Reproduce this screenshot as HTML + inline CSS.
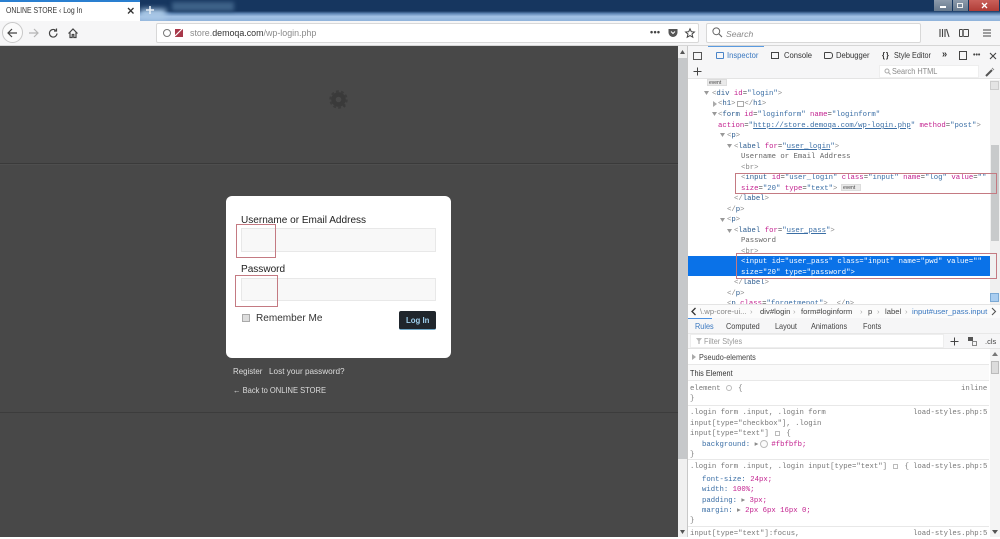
<!DOCTYPE html>
<html><head><meta charset="utf-8"><style>
html,body{margin:0;padding:0;width:1000px;height:537px;overflow:hidden;background:#fff;font-family:"Liberation Sans",sans-serif}
.a{position:absolute}
.t{position:absolute;white-space:pre;line-height:10px}
.m{font:7.3px/10px "Liberation Mono",monospace;color:#555;position:absolute;white-space:pre}
.s{font:7.3px/10px "Liberation Mono",monospace;color:#777;position:absolute;white-space:pre}
.m b,.s b{font-weight:normal}
.p{color:#c3228f}.v{color:#2c5c8f}.g{color:#8a8a8a}.n{color:#3a6ea5}
.tab{position:absolute;font-size:8.3px;line-height:10px;color:#333;white-space:pre;transform:scaleX(.92);transform-origin:0 0}
.rt{position:absolute;font-size:8.3px;line-height:10px;color:#444;white-space:pre;transform:scaleX(.88);transform-origin:0 0}
svg{position:absolute;overflow:visible}
.red{position:absolute;border:1px solid #c47a82;box-sizing:border-box;z-index:5}
</style></head><body>
<!-- title bar -->
<div class="a" style="left:0;top:0;width:1000px;height:21px;background:#16365f"></div>
<div class="a" style="left:140px;top:11px;width:860px;height:10px;background:linear-gradient(#16365f 0,#5f86b4 25%,#a4c3e6 55%,#8fb2da 100%)"></div>
<div class="a" style="left:140px;top:9px;width:26px;height:10px;background:#a9c8e6;filter:blur(3px)"></div>
<div class="a" style="left:172px;top:2px;width:62px;height:9px;background:#3e6288;filter:blur(2px)"></div>
<div class="a" style="left:0;top:0;width:140px;height:2px;background:#2a7fd0"></div>
<div class="a" style="left:0;top:2px;width:140px;height:19px;background:#fff"></div>
<div class="t" style="left:6px;top:6px;font-size:8px;color:#333;transform:scaleX(.86);transform-origin:0 0">ONLINE STORE ‹ Log In</div>
<svg style="left:127px;top:7px" width="9" height="9"><path d="M1 1L6.5 6.5M6.5 1L1 6.5" stroke="#333" stroke-width="1.3"/></svg>
<svg style="left:145px;top:5px" width="11" height="11"><path d="M5 1V9M1 5H9" stroke="#e6eef6" stroke-width="1.6"/></svg>
<!-- window buttons -->
<div class="a" style="left:934px;top:0;width:18px;height:11px;background:linear-gradient(#8d9bab,#66788c)"></div>
<div class="a" style="left:953px;top:0;width:15px;height:11px;background:linear-gradient(#8d9bab,#66788c)"></div>
<div class="a" style="left:969px;top:0;width:30px;height:11px;background:linear-gradient(#c9605a,#b03c36)"></div>
<div class="a" style="left:940px;top:6px;width:6px;height:2px;background:#fff"></div>
<div class="a" style="left:957px;top:3px;width:6px;height:5px;border:1px solid #eee;box-sizing:border-box"></div>
<svg style="left:981px;top:3px" width="7" height="6"><path d="M1 0L6 5M6 0L1 5" stroke="#fff" stroke-width="1.3"/></svg>
<!-- toolbar -->
<div class="a" style="left:0;top:21px;width:1000px;height:25px;background:#f6f6f7"></div>
<div class="a" style="left:2px;top:22px;width:21px;height:21px;border-radius:50%;border:1px solid #c8c8c8;background:#fbfbfb;box-sizing:border-box"></div>
<svg style="left:7px;top:28px" width="11" height="10"><path d="M5 1L1 5L5 9M1 5H10" fill="none" stroke="#444" stroke-width="1.2"/></svg>
<svg style="left:28px;top:28px" width="11" height="10"><path d="M6 1L10 5L6 9M10 5H1" fill="none" stroke="#b5b5b5" stroke-width="1.2"/></svg>
<svg style="left:48px;top:28px" width="11" height="11"><path d="M9 5.5A3.8 3.8 0 1 1 7.6 2.3M8.5 0.5V3H6" fill="none" stroke="#444" stroke-width="1.2"/></svg>
<svg style="left:68px;top:28px" width="11" height="11"><path d="M0.5 5.5L5 1L9.5 5.5M2 4.5V9.5H4.2V6.5H5.8V9.5H8V4.5" fill="none" stroke="#444" stroke-width="1.2"/></svg>
<div class="a" style="left:156px;top:23px;width:543px;height:20px;background:#fff;border:1px solid #d8d8d8;box-sizing:border-box;border-radius:2px"></div>
<div class="a" style="left:163px;top:29px;width:8px;height:8px;border:1px solid #777;border-radius:50%;box-sizing:border-box"></div>
<div class="a" style="left:175px;top:29px;width:8px;height:8px;background:#a8384a"></div>
<svg style="left:175px;top:28px" width="9" height="9"><path d="M0 8L8 0" stroke="#fff" stroke-width="1.2"/></svg>
<div class="t" style="left:190px;top:28px;font-size:8.9px;color:#8a8a8a">store.<span style="color:#333">demoqa.com</span>/wp-login.php</div>
<div class="t" style="left:650px;top:27px;font-size:9px;color:#444;font-weight:bold;letter-spacing:.3px">•••</div>
<svg style="left:668px;top:28px" width="11" height="10"><path d="M0.5 1H9.5V4.5A4.5 4.5 0 0 1 0.5 4.5Z" fill="#555"/><path d="M3 3.5L5 5.5L7 3.5" stroke="#fff" fill="none"/></svg>
<svg style="left:685px;top:28px" width="11" height="11"><path d="M5 .8L6.3 3.7L9.4 4L7 6.1L7.8 9.2L5 7.6L2.2 9.2L3 6.1L.6 4L3.7 3.7Z" fill="none" stroke="#444"/></svg>
<div class="a" style="left:706px;top:23px;width:215px;height:20px;background:#fff;border:1px solid #d8d8d8;box-sizing:border-box;border-radius:2px"></div>
<svg style="left:712px;top:27px" width="11" height="11"><circle cx="4.3" cy="4.3" r="3.4" fill="none" stroke="#666"/><path d="M6.8 6.8L10 10" stroke="#666" stroke-width="1.1"/></svg>
<div class="t" style="left:726px;top:29px;font-size:8.6px;font-style:italic;color:#888">Search</div>
<svg style="left:939px;top:28px" width="11" height="10"><path d="M1 1V9M3.5 1V9M6 1V9M7.5 1L10 9" stroke="#444" stroke-width="1.1" fill="none"/></svg>
<div class="a" style="left:959px;top:29px;width:10px;height:8px;border:1px solid #444;border-radius:1px;box-sizing:border-box"></div>
<div class="a" style="left:962px;top:29px;width:2px;height:8px;background:#777"></div>
<svg style="left:983px;top:29px" width="9" height="8"><path d="M0 1H8M0 4H8M0 7H8" stroke="#444" stroke-width="1.1"/></svg>
<div class="a" style="left:0;top:45px;width:1000px;height:1px;background:#d6d6d6"></div>
<!-- page -->
<div class="a" style="left:0;top:46px;width:678px;height:491px;background:#484848"></div>
<div class="a" style="left:0;top:163px;width:678px;height:1px;background:#3a3a3a"></div>
<div class="a" style="left:0;top:164px;width:678px;height:1px;background:#4e4e4e"></div>
<div class="a" style="left:0;top:412px;width:678px;height:1px;background:#3c3c3c"></div>
<svg style="left:329px;top:90px" width="20" height="20"><circle cx="9.5" cy="9.5" r="5" fill="none" stroke="#3a3a3a" stroke-width="4.4"/><circle cx="9.5" cy="9.5" r="8" fill="none" stroke="#3c3c3c" stroke-width="2.4" stroke-dasharray="2.8 2.2"/><path d="M12 12L16 17" stroke="#3a3a3a" stroke-width="2"/></svg>
<!-- scrollbar -->
<div class="a" style="left:678px;top:46px;width:9px;height:491px;background:#f0f0f0"></div>
<div class="a" style="left:678px;top:58px;width:9px;height:401px;background:#c6c8ca"></div>
<svg style="left:680px;top:50px" width="5" height="4"><path d="M0 4L2.5 0L5 4Z" fill="#555"/></svg>
<svg style="left:680px;top:530px" width="5" height="4"><path d="M0 0L2.5 4L5 0Z" fill="#555"/></svg>
<!-- login box -->
<div class="a" style="left:226px;top:196px;width:225px;height:162px;background:#fff;border-radius:6px"></div>
<div class="t" style="left:241px;top:216px;font-size:10.05px;color:#222">Username or Email Address</div>
<div class="a" style="left:241px;top:228px;width:195px;height:24px;background:#f8f8f8;border:1px solid #e8e8e8;box-sizing:border-box"></div>
<div class="t" style="left:241px;top:265px;font-size:10.05px;color:#222">Password</div>
<div class="a" style="left:241px;top:278px;width:195px;height:23px;background:#f8f8f8;border:1px solid #e8e8e8;box-sizing:border-box"></div>
<div class="red" style="left:236px;top:224px;width:40px;height:34px"></div>
<div class="red" style="left:235px;top:275px;width:43px;height:32px"></div>
<div class="a" style="left:242px;top:314px;width:8px;height:8px;background:#ddd;border:1px solid #aaa;box-sizing:border-box"></div>
<div class="t" style="left:256px;top:314px;font-size:10.05px;color:#333">Remember Me</div>
<div class="a" style="left:399px;top:311px;width:37px;height:19px;background:#20262c;border-bottom:1px solid #6fa8c8;box-sizing:border-box;border-radius:2px"></div>
<div class="t" style="left:406px;top:316px;font-size:7.8px;font-weight:bold;color:#9fd0ee">Log In</div>
<div class="t" style="left:233px;top:367px;font-size:7.9px;color:#ddd">Register</div>
<div class="t" style="left:269px;top:367px;font-size:8.2px;color:#ddd">Lost your password?</div>
<div class="t" style="left:233px;top:385px;font-size:8.3px;color:#ddd;transform:scaleX(.91);transform-origin:0 0">← Back to ONLINE STORE</div>
<!-- devtools -->
<div class="a" style="left:687px;top:46px;width:313px;height:491px;background:#fff"></div>
<div class="a" style="left:687px;top:46px;width:1px;height:491px;background:#c8c8c8"></div>
<div class="a" style="left:688px;top:46px;width:312px;height:18px;background:#f6f6f7"></div>
<div class="a" style="left:688px;top:64px;width:312px;height:15px;background:#f6f6f7;border-bottom:1px solid #e4e4e4;box-sizing:border-box"></div>
<div class="a" style="left:708px;top:46px;width:56px;height:1px;background:#5a9be0"></div>
<div class="a" style="left:693px;top:52px;width:9px;height:8px;border:1px solid #555;box-sizing:border-box"></div>
<div class="a" style="left:716px;top:52px;width:8px;height:7px;border:1px solid #4a84c8;box-sizing:border-box;border-radius:1px"></div>
<div class="tab" style="left:727px;top:50px;color:#3a78c0">Inspector</div>
<div class="a" style="left:771px;top:52px;width:8px;height:7px;border:1px solid #444;box-sizing:border-box"></div>
<div class="tab" style="left:784px;top:50px">Console</div>
<div class="a" style="left:824px;top:52px;width:9px;height:7px;border:1px solid #444;box-sizing:border-box;border-radius:1px 3px 3px 1px"></div>
<div class="tab" style="left:836px;top:50px">Debugger</div>
<div class="tab" style="left:882px;top:50px;font-weight:bold;letter-spacing:1px">{}</div>
<div class="tab" style="left:894px;top:50px;transform:scaleX(.87)">Style Editor</div>
<div class="tab" style="left:942px;top:50px;font-weight:bold;font-size:10px">»</div>
<div class="a" style="left:959px;top:51px;width:8px;height:9px;border:1px solid #444;box-sizing:border-box"></div>
<div class="t" style="left:973px;top:51px;font-size:7px;font-weight:bold;color:#444">•••</div>
<svg style="left:989px;top:52px" width="8" height="8"><path d="M1 1L7 7M7 1L1 7" stroke="#444" stroke-width="1.1"/></svg>
<svg style="left:693px;top:67px" width="10" height="10"><path d="M4.5 .5V8.5M.5 4.5H8.5" stroke="#444"/></svg>
<div class="a" style="left:879px;top:65px;width:100px;height:13px;background:#fff;border:1px solid #eee;box-sizing:border-box"></div>
<div class="tab" style="left:892px;top:67px;color:#8a8a8a;font-size:8px">Search HTML</div>
<svg style="left:884px;top:68px" width="7" height="7"><circle cx="3" cy="3" r="2" fill="none" stroke="#aaa"/><path d="M4.5 4.5L6.5 6.5" stroke="#aaa"/></svg>
<svg style="left:985px;top:67px" width="10" height="10"><path d="M1 9L7 3" stroke="#555" stroke-width="2"/><path d="M7 1L9 3" stroke="#888"/></svg>
<!-- markup -->
<div class="a" style="left:707px;top:79px;width:20px;height:7px;background:#eaeaea;border:1px solid #ddd;box-sizing:border-box"></div>
<div class="t" style="left:709px;top:78px;font-size:5px;color:#444">event</div>
<div class="m" style="left:712px;top:88.5px"><b class="g">&lt;</b><b class="v">div</b> <b class="p">id</b>=<b class="n">"login"</b><b class="g">&gt;</b></div>
<div class="m" style="left:718px;top:99px"><b class="g">&lt;</b><b class="v">h1</b><b class="g">&gt;</b>  <b class="g">&lt;/</b><b class="v">h1</b><b class="g">&gt;</b></div>
<div class="a" style="left:737px;top:101px;width:7px;height:6px;border:1px solid #aaa;box-sizing:border-box"></div>
<div class="m" style="left:718px;top:110px"><b class="g">&lt;</b><b class="v">form</b> <b class="p">id</b>=<b class="n">"loginform"</b> <b class="p">name</b>=<b class="n">"loginform"</b></div>
<div class="m" style="left:718px;top:121px"><b class="p">action</b>=<b class="n">"<u>http://store.demoqa.com/wp-login.php</u>"</b> <b class="p">method</b>=<b class="n">"post"</b><b class="g">&gt;</b></div>
<div class="m" style="left:727px;top:131px"><b class="g">&lt;</b><b class="v">p</b><b class="g">&gt;</b></div>
<div class="m" style="left:734px;top:141.5px"><b class="g">&lt;</b><b class="v">label</b> <b class="p">for</b>=<b class="n">"<u>user_login</u>"</b><b class="g">&gt;</b></div>
<div class="m" style="left:741px;top:152px;color:#666">Username or Email Address</div>
<div class="m" style="left:741px;top:162.5px"><b class="g">&lt;br&gt;</b></div>
<div class="m" style="left:741px;top:173px"><b class="g">&lt;</b><b class="v">input</b> <b class="p">id</b>=<b class="n">"user_login"</b> <b class="p">class</b>=<b class="n">"input"</b> <b class="p">name</b>=<b class="n">"log"</b> <b class="p">value</b>=<b class="n">""</b></div>
<div class="m" style="left:741px;top:183.5px"><b class="p">size</b>=<b class="n">"20"</b> <b class="p">type</b>=<b class="n">"text"</b><b class="g">&gt;</b></div>
<div class="a" style="left:841px;top:184px;width:20px;height:7px;background:#eaeaea;border:1px solid #ddd;box-sizing:border-box"></div>
<div class="t" style="left:843px;top:183px;font-size:5px;color:#444">event</div>
<div class="red" style="left:735px;top:173px;width:262px;height:21px"></div>
<div class="m" style="left:734px;top:194px"><b class="g">&lt;/</b><b class="v">label</b><b class="g">&gt;</b></div>
<div class="m" style="left:727px;top:204.5px"><b class="g">&lt;/</b><b class="v">p</b><b class="g">&gt;</b></div>
<div class="m" style="left:727px;top:215px"><b class="g">&lt;</b><b class="v">p</b><b class="g">&gt;</b></div>
<div class="m" style="left:734px;top:225.5px"><b class="g">&lt;</b><b class="v">label</b> <b class="p">for</b>=<b class="n">"<u>user_pass</u>"</b><b class="g">&gt;</b></div>
<div class="m" style="left:741px;top:236px;color:#666">Password</div>
<div class="m" style="left:741px;top:246.5px"><b class="g">&lt;br&gt;</b></div>
<div class="a" style="left:688px;top:256px;width:302px;height:20px;background:#0a72e8"></div>
<div class="m" style="left:741px;top:257px;color:#fff">&lt;input id="user_pass" class="input" name="pwd" value=""</div>
<div class="m" style="left:741px;top:267.5px;color:#fff">size="20" type="password"&gt;</div>
<div class="red" style="left:736px;top:253px;width:261px;height:26px"></div>
<div class="m" style="left:734px;top:278px"><b class="g">&lt;/</b><b class="v">label</b><b class="g">&gt;</b></div>
<div class="m" style="left:727px;top:288.5px"><b class="g">&lt;/</b><b class="v">p</b><b class="g">&gt;</b></div>
<div class="m" style="left:727px;top:298.5px"><b class="g">&lt;</b><b class="v">p</b> <b class="p">class</b>=<b class="n">"forgetmenot"</b><b class="g">&gt;</b>  <b class="g">&lt;/</b><b class="v">p</b><b class="g">&gt;</b></div>
<svg style="left:704px;top:91px" width="5" height="5"><path d="M0 0H5L2.5 4Z" fill="#999"/></svg>
<svg style="left:713px;top:101px" width="5" height="6"><path d="M0 0V6L4 3Z" fill="#aaa"/></svg>
<svg style="left:712px;top:112px" width="5" height="5"><path d="M0 0H5L2.5 4Z" fill="#999"/></svg>
<svg style="left:720px;top:133px" width="5" height="5"><path d="M0 0H5L2.5 4Z" fill="#999"/></svg>
<svg style="left:727px;top:144px" width="5" height="5"><path d="M0 0H5L2.5 4Z" fill="#999"/></svg>
<svg style="left:720px;top:218px" width="5" height="5"><path d="M0 0H5L2.5 4Z" fill="#999"/></svg>
<svg style="left:727px;top:229px" width="5" height="5"><path d="M0 0H5L2.5 4Z" fill="#999"/></svg>
<!-- markup scrollbar -->
<div class="a" style="left:990px;top:80px;width:10px;height:224px;background:#f0f0f0"></div>
<div class="a" style="left:991px;top:145px;width:8px;height:96px;background:#c8cacb"></div>
<div class="a" style="left:990px;top:81px;width:9px;height:9px;background:#e4e4e4;border:1px solid #ccc;box-sizing:border-box"></div>
<div class="a" style="left:990px;top:293px;width:9px;height:9px;background:#a9cdf0;border:1px solid #7ba9d4;box-sizing:border-box"></div>
<!-- breadcrumbs -->
<div class="a" style="left:688px;top:304px;width:312px;height:14px;background:#fbfbfb;border-top:1px solid #e4e4e4;box-sizing:border-box"></div>
<svg style="left:691px;top:307px" width="6" height="9"><path d="M4.5 1L1 4.5L4.5 8" fill="none" stroke="#333" stroke-width="1.3"/></svg>
<div class="t" style="left:700px;top:307px;font-size:7.7px;color:#888">\.wp-core-ui...</div>
<div class="t" style="left:750px;top:307px;font-size:7.7px;color:#aaa">›</div>
<div class="t" style="left:760px;top:307px;font-size:7.7px;color:#444">div#login</div>
<div class="t" style="left:801px;top:307px;font-size:7.7px;color:#444">form#loginform</div>
<div class="t" style="left:793px;top:307px;font-size:7.7px;color:#aaa">›</div>
<div class="t" style="left:860px;top:307px;font-size:7.7px;color:#aaa">›</div>
<div class="t" style="left:868px;top:307px;font-size:7.7px;color:#444">p</div>
<div class="t" style="left:877px;top:307px;font-size:7.7px;color:#aaa">›</div>
<div class="t" style="left:885px;top:307px;font-size:7.7px;color:#444">label</div>
<div class="t" style="left:905px;top:307px;font-size:7.7px;color:#aaa">›</div>
<div class="t" style="left:912px;top:307px;font-size:7.7px;color:#3a78c0">input#user_pass.input</div>
<svg style="left:991px;top:307px" width="6" height="9"><path d="M1 1L4.5 4.5L1 8" fill="none" stroke="#555" stroke-width="1.1"/></svg>
<!-- rules -->
<div class="a" style="left:688px;top:318px;width:312px;height:15px;background:#f6f6f7"></div>
<div class="a" style="left:688px;top:318px;width:24px;height:1px;background:#4a90e2"></div>
<div class="rt" style="left:695px;top:321px;color:#3a78c0">Rules</div>
<div class="rt" style="left:726px;top:321px">Computed</div>
<div class="rt" style="left:775px;top:321px">Layout</div>
<div class="rt" style="left:811px;top:321px">Animations</div>
<div class="rt" style="left:863px;top:321px">Fonts</div>
<div class="a" style="left:688px;top:333px;width:312px;height:16px;background:#f6f6f7;border-top:1px solid #e8e8e8;border-bottom:1px solid #e4e4e4;box-sizing:border-box"></div>
<div class="a" style="left:690px;top:334px;width:254px;height:14px;background:#fff;border:1px solid #eee;box-sizing:border-box"></div>
<div class="rt" style="left:704px;top:336px;color:#999">Filter Styles</div>
<svg style="left:696px;top:338px" width="6" height="6"><path d="M0 0H6L3.7 3V6H2.3V3Z" fill="#bbb"/></svg>
<svg style="left:950px;top:337px" width="9" height="9"><path d="M4.5 .5V8.5M.5 4.5H8.5" stroke="#444"/></svg>
<div class="a" style="left:968px;top:337px;width:5px;height:4px;background:#555"></div>
<div class="a" style="left:972px;top:341px;width:5px;height:5px;border:1px solid #888;box-sizing:border-box"></div>
<div class="t" style="left:985px;top:337px;font-size:7.5px;color:#444">.cls</div>
<svg style="left:692px;top:354px" width="5" height="6"><path d="M0 0V6L4 3Z" fill="#aaa"/></svg>
<div class="rt" style="left:699px;top:352px">Pseudo-elements</div>
<div class="a" style="left:688px;top:364px;width:301px;height:1px;background:#e8e8e8"></div>
<div class="a" style="left:688px;top:365px;width:301px;height:16px;background:#fafafa;border-bottom:1px solid #e8e8e8;box-sizing:border-box"></div>
<div class="rt" style="left:690px;top:368px;color:#333">This Element</div>
<div class="s" style="left:690px;top:383.5px">element    {</div>
<div class="a" style="left:726px;top:385px;width:6px;height:6px;border:1px solid #bbb;border-radius:50%;box-sizing:border-box"></div>
<div class="s" style="left:961px;top:383.5px">inline</div>
<div class="s" style="left:690px;top:394px">}</div>
<div class="a" style="left:688px;top:405px;width:301px;height:1px;background:#e8e8e8"></div>
<div class="s" style="left:690px;top:408px">.login form .input, .login form</div>
<div class="s" style="left:913px;top:408px">load-styles.php:5</div>
<div class="s" style="left:690px;top:418.5px">input[type="checkbox"], .login</div>
<div class="s" style="left:690px;top:429px">input[type="text"]    {</div>
<div class="a" style="left:775px;top:431px;width:5px;height:5px;border:1px solid #bbb;box-sizing:border-box"></div>
<div class="s" style="left:702px;top:439.5px"><b class="n">background:</b> <b class="g">▸</b>   <b class="p">#fbfbfb;</b></div>
<div class="a" style="left:760px;top:440px;width:8px;height:8px;border:1px solid #bbb;border-radius:50%;box-sizing:border-box;background:#fbfbfb"></div>
<div class="s" style="left:690px;top:449.5px">}</div>
<div class="a" style="left:688px;top:459px;width:301px;height:1px;background:#e8e8e8"></div>
<div class="s" style="left:690px;top:462px">.login form .input, .login input[type="text"]    {</div>
<div class="a" style="left:893px;top:464px;width:5px;height:5px;border:1px solid #bbb;box-sizing:border-box"></div>
<div class="s" style="left:913px;top:462px;background:#fff">load-styles.php:5</div>
<div class="s" style="left:702px;top:474.5px"><b class="n">font-size:</b> <b class="p">24px;</b></div>
<div class="s" style="left:702px;top:485px"><b class="n">width:</b> <b class="p">100%;</b></div>
<div class="s" style="left:702px;top:495.5px"><b class="n">padding:</b> <b class="g">▸</b> <b class="p">3px;</b></div>
<div class="s" style="left:702px;top:506px"><b class="n">margin:</b> <b class="g">▸</b> <b class="p">2px 6px 16px 0;</b></div>
<div class="s" style="left:690px;top:516px">}</div>
<div class="a" style="left:688px;top:526px;width:301px;height:1px;background:#e8e8e8"></div>
<div class="s" style="left:690px;top:529px">input[type="text"]:focus,</div>
<div class="s" style="left:913px;top:529px">load-styles.php:5</div>
<!-- rules scrollbar -->
<div class="a" style="left:990px;top:349px;width:10px;height:188px;background:#f4f4f4"></div>
<div class="a" style="left:991px;top:361px;width:8px;height:13px;background:#dcdcdc;border:1px solid #bbb;box-sizing:border-box"></div>
<svg style="left:992px;top:352px" width="6" height="4"><path d="M0 4L3 0L6 4Z" fill="#777"/></svg>
<svg style="left:992px;top:530px" width="6" height="4"><path d="M0 0L3 4L6 0Z" fill="#555"/></svg>
</body></html>
